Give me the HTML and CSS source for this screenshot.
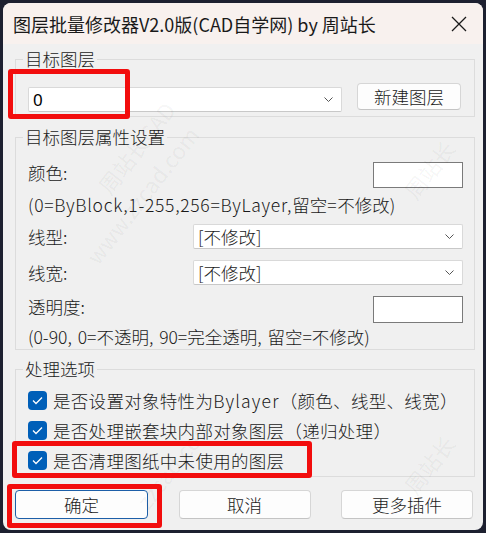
FILE: index.html
```html
<!DOCTYPE html>
<html lang="zh-CN">
<head>
<meta charset="utf-8">
<title>图层批量修改器</title>
<link rel="stylesheet" href="styles.css">
</head>
<body>
<div class="window">
  <div class="titlebar">
    <span class="title">图层批量修改器V2.0版(CAD自学网) by 周站长</span>
    <svg class="close" width="16" height="16" viewBox="0 0 16 16"><path d="M1 1 L15 15 M15 1 L1 15" stroke="#1a1a1a" stroke-width="1.3" fill="none"/></svg>
  </div>
  <div class="content">
    <fieldset class="group g1">
      <legend>目标图层</legend>
      <div class="layer-row">
        <div class="combo combo-layer"><span class="val">0</span><svg class="chev" width="9" height="5" viewBox="0 0 9 5"><path d="M0.5 0.5 L4.5 4.5 L8.5 0.5" stroke="#555" stroke-width="1" fill="none"/></svg></div>
        <button class="btn btn-new">新建图层</button>
      </div>
    </fieldset>

    <fieldset class="group g2">
      <legend>目标图层属性设置</legend>
      <div class="prop-row row-color"><span class="lbl">颜色:</span><div class="edit"></div></div>
      <div class="hint hint1"><span class="en">(0=ByBlock,1-255,256=ByLayer,</span>留空<span class="en">=</span>不修改<span class="en">)</span></div>
      <div class="prop-row row-ltype"><span class="lbl">线型:</span><div class="combo combo-prop"><span class="val">[不修改]</span><svg class="chev" width="9" height="5" viewBox="0 0 9 5"><path d="M0.5 0.5 L4.5 4.5 L8.5 0.5" stroke="#555" stroke-width="1" fill="none"/></svg></div></div>
      <div class="prop-row row-lw"><span class="lbl">线宽:</span><div class="combo combo-prop"><span class="val">[不修改]</span><svg class="chev" width="9" height="5" viewBox="0 0 9 5"><path d="M0.5 0.5 L4.5 4.5 L8.5 0.5" stroke="#555" stroke-width="1" fill="none"/></svg></div></div>
      <div class="prop-row row-tr"><span class="lbl">透明度:</span><div class="edit edit-tr"></div></div>
      <div class="hint hint2">(0-90, 0=不透明, 90=完全透明, 留空=不修改)</div>
    </fieldset>

    <fieldset class="group g3">
      <legend>处理选项</legend>
      <div class="check"><span class="box"><svg width="11" height="9" viewBox="0 0 11 9"><path d="M1 4.5 L4 7.5 L10 1.5" stroke="#fff" stroke-width="1.3" fill="none"/></svg></span><span class="ctext">是否设置对象特性为<span class="en en-by">Bylayer</span>（颜色、线型、线宽）</span></div>
      <div class="check"><span class="box"><svg width="11" height="9" viewBox="0 0 11 9"><path d="M1 4.5 L4 7.5 L10 1.5" stroke="#fff" stroke-width="1.3" fill="none"/></svg></span><span class="ctext">是否处理嵌套块内部对象图层（递归处理）</span></div>
      <div class="check"><span class="box"><svg width="11" height="9" viewBox="0 0 11 9"><path d="M1 4.5 L4 7.5 L10 1.5" stroke="#fff" stroke-width="1.3" fill="none"/></svg></span><span class="ctext">是否清理图纸中未使用的图层</span></div>
    </fieldset>

    <div class="buttons">
      <button class="btn btn-ok">确定</button>
      <button class="btn btn-act">取消</button>
      <button class="btn btn-act">更多插件</button>
    </div>
  </div>

  <span class="wm wm1">周站长CAD</span>
  <span class="wm wm2">www.zzcad.com</span>
  <span class="wm wm3">周站长</span>
  <span class="wm wm4">zzcad.com</span>
  <span class="wm wm5">周站长</span>

  <div class="mark mark1"></div>
  <div class="mark mark2"></div>
  <div class="mark mark3"></div>
</div>
</body>
</html>
```

FILE: styles.css
```css
html, body {
  margin: 0;
  padding: 0;
  background: #1d2030;
  width: 486px;
  height: 533px;
  overflow: hidden;
}

.window {
  position: relative;
  margin: 3px 0 0 3px;
  width: 480px;
  height: 527px;
  background: #f0f0f0;
  border-radius: 8px;
  overflow: hidden;
  font-family: "Noto Sans CJK SC", sans-serif;
  font-weight: 300;
  font-size: 17.5px;
  color: #000;
}

.titlebar {
  height: 41px;
  background: #f8f1ee;
  display: flex;
  align-items: center;
  justify-content: space-between;
  padding: 0 16px 0 10px;
}

.title {
  font-family: "Noto Sans CJK SC", sans-serif;
  font-weight: 400;
  font-size: 18px;
  color: #1a1a1a;
  white-space: nowrap;
}

.close {
  display: block;
}

.content {
  padding: 4px 8px 0 12px;
}

.group {
  margin: 0;
  border: 1px solid #dcdcdc;
  min-width: 0;
}

.group legend {
  padding: 0 2px;
  margin-left: -5px;
  line-height: 22px;
  color: #1a1a1a;
}

.g1 {
  padding: 13px 13px 5px 12px;
}

.layer-row {
  display: flex;
  align-items: flex-start;
  justify-content: space-between;
  height: 28px;
}

.combo {
  box-sizing: border-box;
  background: #fff;
  border: 1px solid #d9d9d9;
  border-bottom-color: #c8c8c8;
  border-radius: 2px;
  display: flex;
  align-items: center;
  justify-content: space-between;
}

.combo-layer {
  width: 314px;
  height: 25px;
  margin-top: 4px;
  padding: 0 8px 0 4px;
}

.combo-layer .val {
  font-family: "Noto Sans", sans-serif;
  font-weight: 400;
  font-size: 17px;
}

.chev {
  display: block;
}

.btn {
  box-sizing: border-box;
  font-family: inherit;
  font-weight: 300;
  font-size: 17.5px;
  color: #1a1a1a;
  background: #fdfdfd;
  border: 1px solid #d6d6d6;
  border-bottom-color: #c4c4c4;
  border-radius: 4px;
  padding: 0;
  line-height: 1;
}

.btn-new {
  width: 104px;
  height: 27px;
}

.g2 {
  margin-top: 9px;
  padding: 14px 11px 1px 12px;
}

.prop-row {
  display: flex;
  align-items: center;
  justify-content: space-between;
}

.lbl {
  color: #1a1a1a;
}

.row-color {
  height: 26px;
}

.row-color .lbl,
.row-tr .lbl {
  margin-bottom: 6px;
}

.edit {
  box-sizing: border-box;
  width: 90px;
  height: 26px;
  background: #fff;
  border: 1px solid #7a7a7a;
}

.edit-tr {
  height: 27px;
}

.hint {
  line-height: 24px;
  color: #1a1a1a;
  white-space: nowrap;
}

.en {
  letter-spacing: 0.7px;
}

.en-by {
  letter-spacing: 1.2px;
}

.hint1 {
  margin-top: 5px;
}

.row-ltype {
  margin-top: 7px;
}

.row-lw {
  margin-top: 11px;
}

.row-tr {
  margin-top: 9px;
}

.hint2 {
  margin-top: 1px;
  line-height: 22px;
  word-spacing: 2px;
}

.combo-prop {
  width: 270px;
  height: 25px;
  padding: 0 8px 0 4px;
}

.combo-prop .val {
  color: #1a1a1a;
}

.g3 {
  margin-top: 8px;
  padding: 5px 8px 1px 12px;
}

.check {
  display: flex;
  align-items: center;
  height: 30px;
  gap: 6px;
  color: #1a1a1a;
  white-space: nowrap;
}

.ctext {
  letter-spacing: 0.3px;
}

.box {
  box-sizing: border-box;
  width: 19px;
  height: 19px;
  border-radius: 4px;
  background: #005fb8;
  display: flex;
  align-items: center;
  justify-content: center;
  flex: none;
}

.box svg {
  display: block;
}

.buttons {
  display: flex;
  justify-content: space-between;
  margin: 13px 2px 0 0;
}

.buttons .btn {
  width: 132px;
  height: 29px;
}

.buttons .btn-ok {
  width: 133px;
  border: 1px solid #1d5fa8;
}

/* watermark overlay */
.wm {
  position: absolute;
  font-family: "Noto Sans CJK SC", sans-serif;
  font-weight: 400;
  font-size: 22px;
  color: rgba(0, 0, 0, 0.05);
  transform: rotate(-52deg);
  transform-origin: left bottom;
  white-space: nowrap;
  pointer-events: none;
}

.wm1 { left: 112px; top: 165px; }
.wm2 { left: 100px; top: 235px; }
.wm3 { left: 418px; top: 170px; }
.wm4 { left: 150px; top: 480px; }
.wm5 { left: 418px; top: 465px; }

/* red annotation boxes */
.mark {
  position: absolute;
  box-sizing: border-box;
  border: 5px solid #f20d0d;
  border-radius: 3px;
  pointer-events: none;
}

.mark1 { left: 5px; top: 66px; width: 122px; height: 50px; }
.mark2 { left: 9px; top: 438px; width: 300px; height: 37px; }
.mark3 { left: 4px; top: 481px; width: 155px; height: 44px; }
```
